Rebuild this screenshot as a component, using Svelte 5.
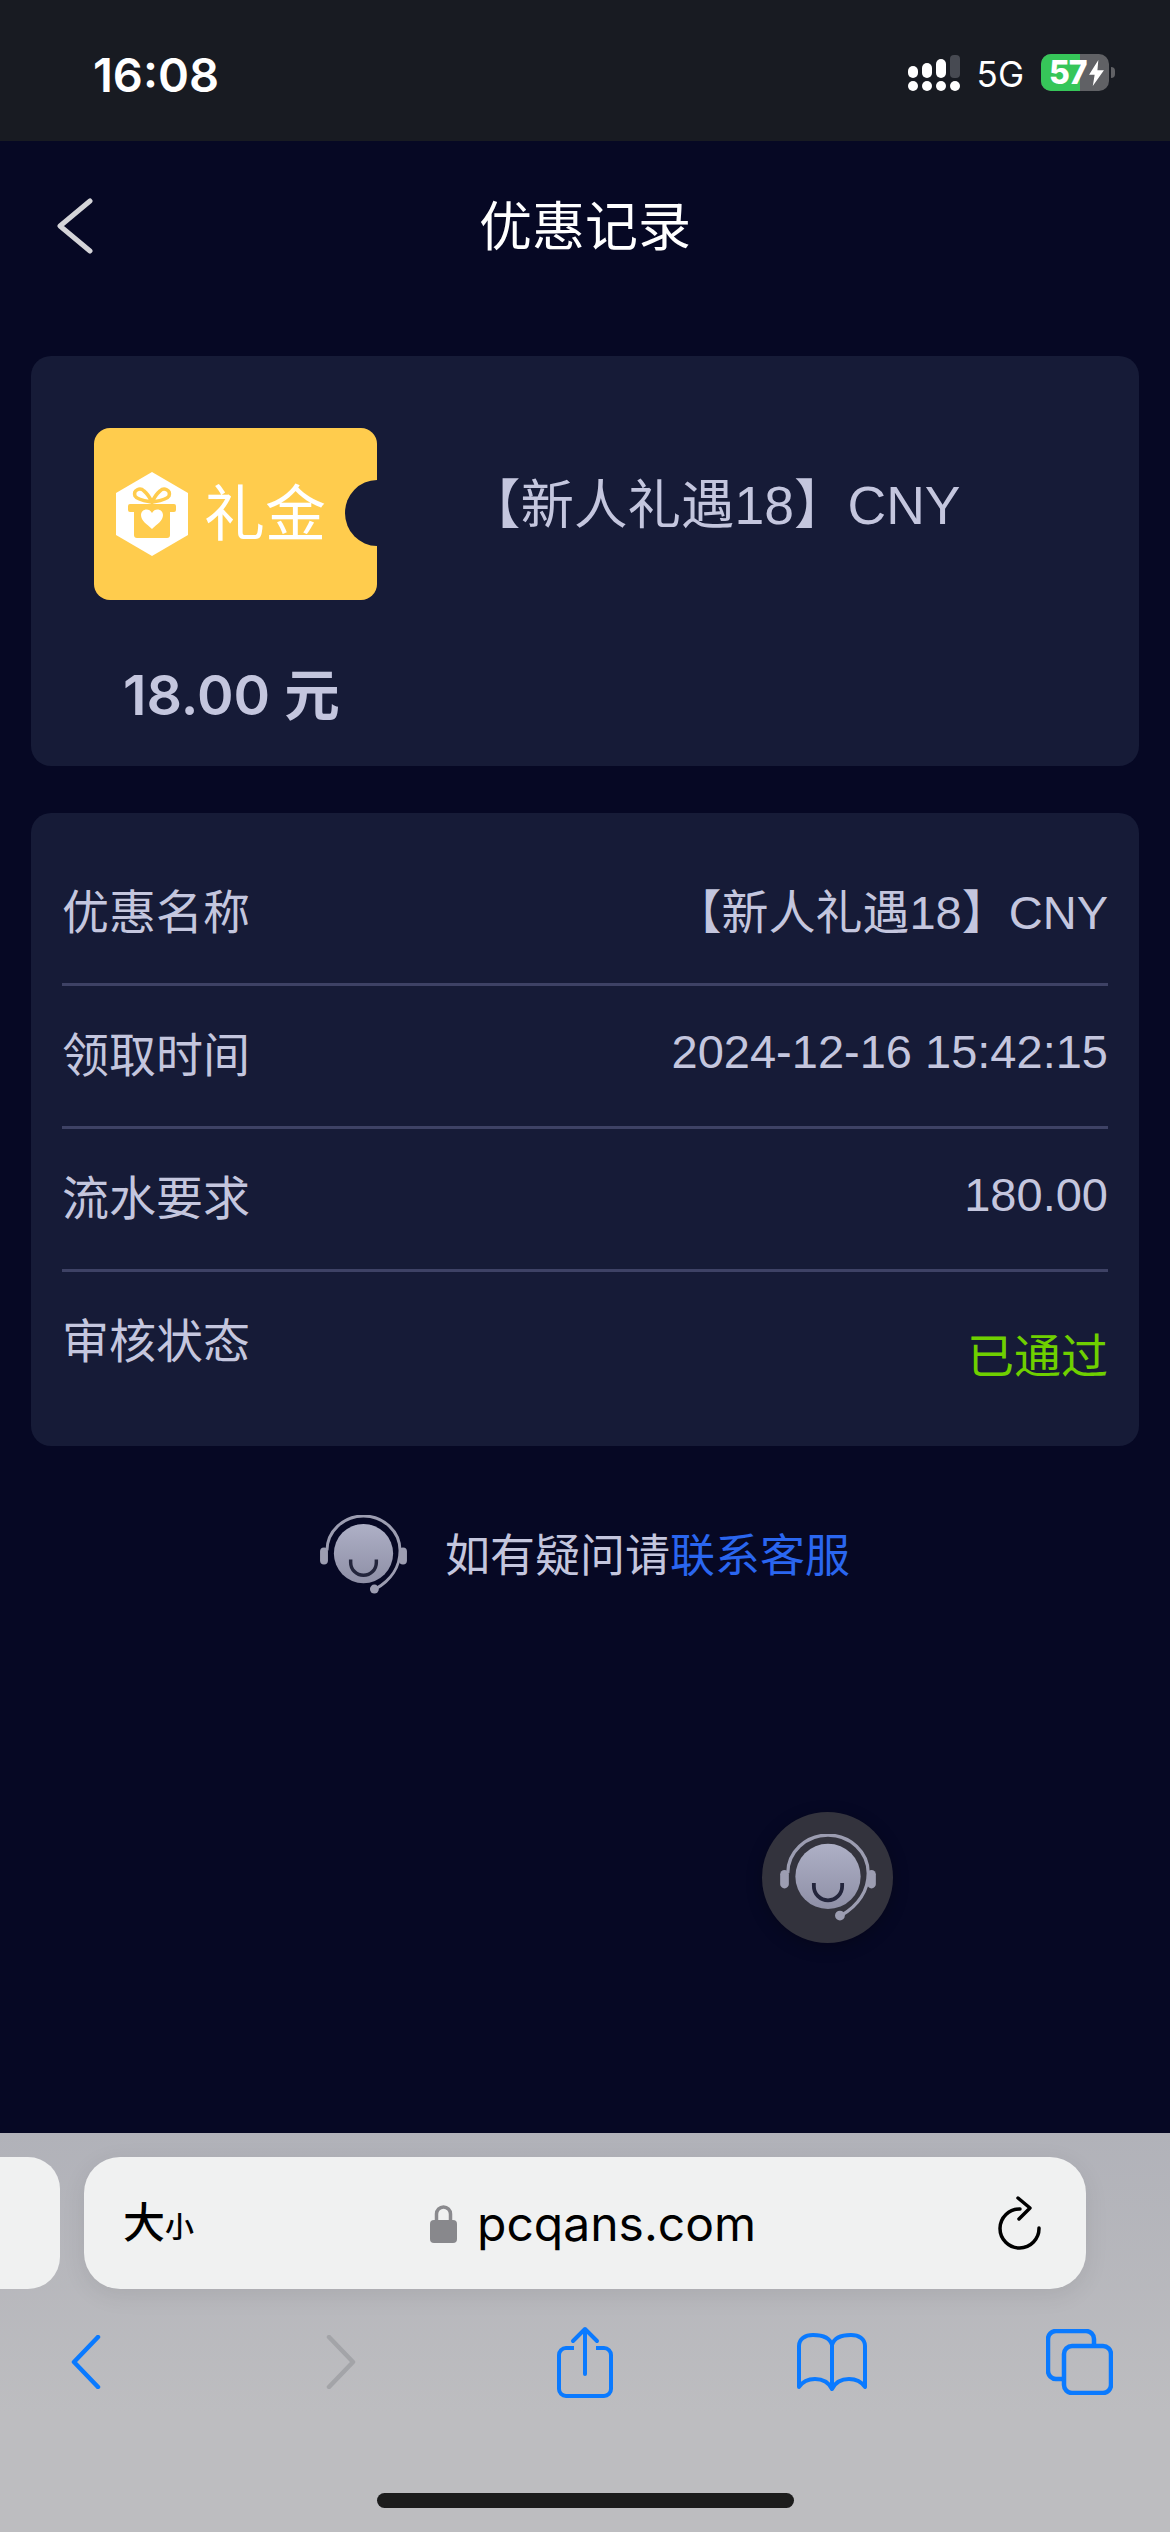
<script lang="ts">
  const rows = [
    { label: '优惠名称', value: '【新人礼遇18】CNY' },
    { label: '领取时间', value: '2024-12-16 15:42:15' },
    { label: '流水要求', value: '180.00' },
  ];
</script>

{#snippet headset(cls)}
  <svg class={cls} viewBox="0 0 88 80">
    <defs>
      <linearGradient id="face" x1="0" y1="0" x2="0" y2="1">
        <stop offset="0" stop-color="#aeb0c6" />
        <stop offset="1" stop-color="#8e8fa6" />
      </linearGradient>
    </defs>
    <path d="M7 36A37 35 0 0 1 81 36C81 52 72 66 56 75" fill="none" stroke="#9c9db1" stroke-width="3" />
    <rect x="0" y="33" width="8" height="17" rx="4" fill="#9c9db1" />
    <rect x="80" y="33" width="8" height="17" rx="4" fill="#9c9db1" />
    <circle cx="55" cy="75" r="4.5" fill="#9c9db1" />
    <ellipse cx="44" cy="39" rx="30" ry="30" fill="url(#face)" />
    <path d="M31 45V48A13 13 0 0 0 57 48V45" fill="none" stroke="#23253c" stroke-width="3.5" />
  </svg>
{/snippet}

<div class="page">
  <div class="status">
    <span class="time">16:08</span>
    <div class="status-right">
      <svg class="signal" viewBox="0 0 54 36" fill="#fff">
        <rect x="0" y="11" width="10" height="12" rx="5" />
        <rect x="14" y="8" width="10" height="15" rx="5" />
        <rect x="28" y="4" width="10" height="19" rx="5" />
        <rect x="42" y="0" width="10" height="23" rx="4" fill="#474a52" />
        <circle cx="5" cy="31" r="5" />
        <circle cx="19" cy="31" r="5" />
        <circle cx="33" cy="31" r="5" />
        <circle cx="47" cy="31" r="5" />
      </svg>
      <span class="net">5G</span>
      <div class="battery">
        <div class="battery-fill"></div>
        <span class="battery-num">57</span>
        <svg class="bolt" viewBox="0 0 18 28"><path d="M11 0 1 16h6L5 28 17 11h-7z" fill="#fff" /></svg>
      </div>
      <div class="nub"></div>
    </div>
  </div>

  <div class="nav">
    <svg class="nav-back" viewBox="0 0 36 56"><path d="M33 3 3 28l30 25" fill="none" stroke="#d4d4d8" stroke-width="5" stroke-linecap="round" stroke-linejoin="round" /></svg>
    <h1>优惠记录</h1>
  </div>

  <div class="card promo">
    <div class="promo-left">
      <div class="ticket">
        <svg class="hex" viewBox="0 0 72 84">
          <path d="M36 0 72 21v42L36 84 0 63V21z" fill="#fff" />
          <path d="M36 30C30 29 21 28 19 24 17 18 24 15 28 19 32 22 34 26 36 30 38 26 40 22 44 19 48 15 55 18 53 24 51 28 42 29 36 30Z" fill="none" stroke="#ffcc4d" stroke-width="3.5" />
          <path d="M14 32H58a2 2 0 0 1 2 2V38a2 2 0 0 1-2 2H54V63a3 3 0 0 1-3 3H21a3 3 0 0 1-3-3V40H14a2 2 0 0 1-2-2V34a2 2 0 0 1 2-2Z" fill="#ffcc4d" />
          <path d="M36 57C31 52 25 49 25 43 25 37 33 35 36 41 39 35 47 37 47 43 47 49 41 52 36 57Z" fill="#fff" />
        </svg>
        <span class="ticket-text">礼金</span>
      </div>
      <div class="amount">18.00 元</div>
    </div>
    <div class="promo-title">【新人礼遇18】CNY</div>
  </div>

  <div class="card info">
    {#each rows as row (row.label)}
      <div class="row">
        <span>{row.label}</span>
        <span class="value">{row.value}</span>
      </div>
    {/each}
    <div class="row last">
      <span>审核状态</span>
      <span class="passed">已通过</span>
    </div>
  </div>

  <div class="help">
    {@render headset('help-icon')}
    <span class="help-text">如有疑问请<span class="link">联系客服</span></span>
  </div>

  <div class="float">
    {@render headset('float-icon')}
  </div>

  <div class="safari">
    <div class="tabs">
      <div class="url-prev"></div>
      <div class="url">
        <span class="aa">大<small>小</small></span>
        <div class="addr">
          <svg class="lock" viewBox="0 0 29 39">
            <path d="M7.5 18V10a7 7 0 0 1 14 0v8" fill="none" stroke="#8a8a8e" stroke-width="3.5" />
            <rect x="1" y="16" width="27" height="23" rx="4" fill="#88888c" />
          </svg>
          <span>pcqans.com</span>
        </div>
        <svg class="reload" viewBox="0 0 44 54">
          <path d="M22 13A19.500 19.500 0 1 0 41 32" fill="none" stroke="#000" stroke-width="3.500" stroke-linecap="round" />
          <path d="M20 2 32 12 21 23" fill="none" stroke="#000" stroke-width="3.500" stroke-linecap="round" stroke-linejoin="round" />
        </svg>
      </div>
    </div>
    <div class="toolbar">
      <svg class="tb-chev" viewBox="0 0 30 54"><path d="M27 2 3 27l24 25" fill="none" stroke="#0a7aff" stroke-width="4.500" stroke-linecap="round" stroke-linejoin="round" /></svg>
      <svg class="tb-chev" viewBox="0 0 30 54"><path d="M3 2l24 25L3 52" fill="none" stroke="#a3a4a8" stroke-width="4.500" stroke-linecap="round" stroke-linejoin="round" /></svg>
      <svg class="tb-share" viewBox="0 0 56 72" fill="none" stroke="#0a7aff" stroke-width="4">
        <path d="M17 22H9a7 7 0 0 0-7 7V63a7 7 0 0 0 7 7H47a7 7 0 0 0 7-7V29a7 7 0 0 0-7-7H39" />
        <path d="M28 48V3M16 15 28 3l12 12" stroke-linecap="round" stroke-linejoin="round" />
      </svg>
      <svg class="tb-book" viewBox="0 0 70 58" fill="none" stroke="#0a7aff" stroke-width="4">
        <path d="M35 12C33 5 26 2 16 2 8 2 2 6 2 13V54C6 48 12 46 18 46 26 46 32 50 35 56 38 50 44 46 52 46 58 46 64 48 68 54V13C68 6 62 2 54 2 44 2 37 5 35 12ZM35 12V56" stroke-linejoin="round" />
      </svg>
      <svg class="tb-tabs" viewBox="0 0 67 66" fill="none" stroke="#0a7aff" stroke-width="4.500">
        <path d="M16 50H10a8 8 0 0 1-8-8V10a8 8 0 0 1 8-8H40a8 8 0 0 1 8 8v6" />
        <rect x="18" y="17" width="47" height="47" rx="8" />
      </svg>
    </div>
    <div class="home-bar"></div>
  </div>
</div>

<style>
  :global(body) {
    margin: 0;
    background: #060824;
  }
  .page {
    position: relative;
    display: flex;
    flex-direction: column;
    width: 1170px;
    height: 2532px;
    overflow: hidden;
    background: #060824;
    font-family: 'Inter', 'Noto Sans CJK SC', sans-serif;
    color: #c4c6de;
  }

  .status {
    display: flex;
    align-items: flex-start;
    justify-content: space-between;
    height: 141px;
    box-sizing: border-box;
    padding: 48px 55px 0 93px;
    background: #181b22;
    color: #fff;
  }
  .time {
    font-size: 47px;
    font-weight: 600;
    line-height: 54px;
  }
  .status-right {
    display: flex;
    align-items: flex-start;
    margin-top: 7px;
  }
  .signal {
    width: 54px;
    height: 36px;
  }
  .net {
    margin-left: 15px;
    font-size: 35px;
    line-height: 38px;
    font-weight: 400;
  }
  .battery {
    position: relative;
    display: flex;
    align-items: center;
    width: 68px;
    height: 37px;
    margin-left: 17px;
    margin-top: -1px;
    border-radius: 10px;
    overflow: hidden;
    background: #606165;
  }
  .battery-fill {
    position: absolute;
    left: 0;
    top: 0;
    bottom: 0;
    width: 39px;
    background: #36c659;
  }
  .battery-num {
    position: relative;
    margin-left: 8px;
    font-size: 32px;
    font-weight: 800;
    line-height: 37px;
    letter-spacing: -1px;
  }
  .bolt {
    position: relative;
    width: 17px;
    height: 26px;
    margin-left: 1px;
  }
  .nub {
    width: 4px;
    height: 11px;
    margin: 12px 0 0 2px;
    border-radius: 0 4px 4px 0;
    background: #606165;
  }

  .nav {
    position: relative;
    display: flex;
    align-items: center;
    justify-content: center;
    height: 170px;
  }
  .nav-back {
    position: absolute;
    left: 57px;
    top: 57px;
    width: 36px;
    height: 56px;
  }
  h1 {
    margin: 0;
    padding-top: 2px;
    font-size: 53px;
    font-weight: 400;
    color: #fff;
    line-height: 168px;
  }

  .card {
    margin: 0 31px;
    border-radius: 20px;
    background: #161b37;
  }
  .promo {
    display: flex;
    height: 410px;
    margin-top: 45px;
    box-sizing: border-box;
    padding: 72px 0 0 63px;
  }
  .promo-left {
    width: 283px;
  }
  .ticket {
    position: relative;
    display: flex;
    align-items: center;
    height: 172px;
    box-sizing: border-box;
    padding: 0 0 0 22px;
    border-radius: 16px;
    overflow: hidden;
    background: #ffcc4d;
  }
  .ticket::after {
    content: '';
    position: absolute;
    right: -32px;
    top: 52px;
    width: 64px;
    height: 66px;
    border-radius: 50%;
    background: #161b37;
  }
  .hex {
    width: 72px;
    height: 84px;
  }
  .ticket-text {
    margin-left: 16px;
    font-size: 61px;
    line-height: 1;
    color: #fff;
  }
  .amount {
    margin: 62px 0 0 29px;
    font-size: 55.5px;
    font-weight: 600;
    line-height: 66px;
    white-space: nowrap;
  }
  .promo-title {
    margin: 42px 0 0 90px;
    font-family: 'Liberation Sans', 'Noto Sans CJK SC', sans-serif;
    font-size: 53.5px;
    line-height: 72px;
    white-space: nowrap;
  }

  .info {
    height: 633px;
    margin-top: 47px;
    box-sizing: border-box;
    padding: 30px 31px 0;
  }
  .row {
    display: flex;
    align-items: center;
    justify-content: space-between;
    height: 143px;
    box-sizing: border-box;
    padding-bottom: 9px;
    border-bottom: 3px solid #3e4265;
    font-size: 47px;
    white-space: nowrap;
  }
  .value {
    font-family: 'Liberation Sans', 'Noto Sans CJK SC', sans-serif;
  }
  .row.last {
    align-items: flex-start;
    border-bottom: 0;
    padding-top: 31px;
  }
  .passed {
    margin-top: 15px;
    color: #6fd000;
  }

  .help {
    display: flex;
    align-items: center;
    margin: 69px 0 0 320px;
    font-size: 45px;
    white-space: nowrap;
  }
  .help-icon {
    width: 87px;
    height: 79px;
    margin-right: 38px;
  }
  .help-text {
    padding-bottom: 5px;
  }
  .link {
    color: #2a66f0;
  }

  .float {
    position: absolute;
    left: 762px;
    top: 1812px;
    display: flex;
    align-items: center;
    justify-content: center;
    width: 131px;
    height: 131px;
    border-radius: 50%;
    background: #33333d;
    box-shadow: 0 4px 16px rgba(0, 0, 0, 0.25);
  }
  .float-icon {
    width: 96px;
    height: 87px;
  }

  .safari {
    display: flex;
    flex-direction: column;
    margin-top: auto;
    height: 399px;
    box-sizing: border-box;
    background: linear-gradient(#b1b2b9, #bdbdc0 70%);
  }
  .tabs {
    display: flex;
    gap: 24px;
    margin-top: 24px;
    height: 132px;
  }
  .url-prev {
    width: 60px;
    border-radius: 0 32px 32px 0;
    background: #f0f1f1;
  }
  .url {
    position: relative;
    display: flex;
    align-items: center;
    width: 1002px;
    box-sizing: border-box;
    padding: 0 44px 0 39px;
    border-radius: 36px;
    background: #f0f1f1;
    color: #000;
    box-shadow: 0 6px 24px rgba(0, 0, 0, 0.08);
  }
  .aa {
    width: 100px;
    font-size: 42px;
    font-weight: 500;
    line-height: 1;
  }
  .aa small {
    font-size: 29px;
  }
  .addr {
    flex: 1;
    display: flex;
    align-items: center;
    justify-content: center;
    gap: 19px;
    margin-left: -36px;
    font-family: 'Inter', sans-serif;
    font-size: 48px;
  }
  .lock {
    width: 29px;
    height: 39px;
  }
  .reload {
    width: 44px;
    height: 54px;
  }
  .toolbar {
    display: flex;
    align-items: center;
    height: 72px;
    margin-top: 37px;
    padding-left: 71px;
  }
  .tb-chev {
    width: 30px;
    height: 54px;
  }
  .tb-chev + .tb-chev {
    margin-left: 225px;
  }
  .tb-share {
    width: 56px;
    height: 72px;
    margin-left: 201px;
  }
  .tb-book {
    width: 70px;
    height: 58px;
    margin-left: 184px;
  }
  .tb-tabs {
    width: 67px;
    height: 66px;
    margin-left: 179px;
  }
  .home-bar {
    width: 417px;
    height: 15px;
    margin: 95px auto 0;
    border-radius: 8px;
    background: #1c1c1c;
  }
</style>
